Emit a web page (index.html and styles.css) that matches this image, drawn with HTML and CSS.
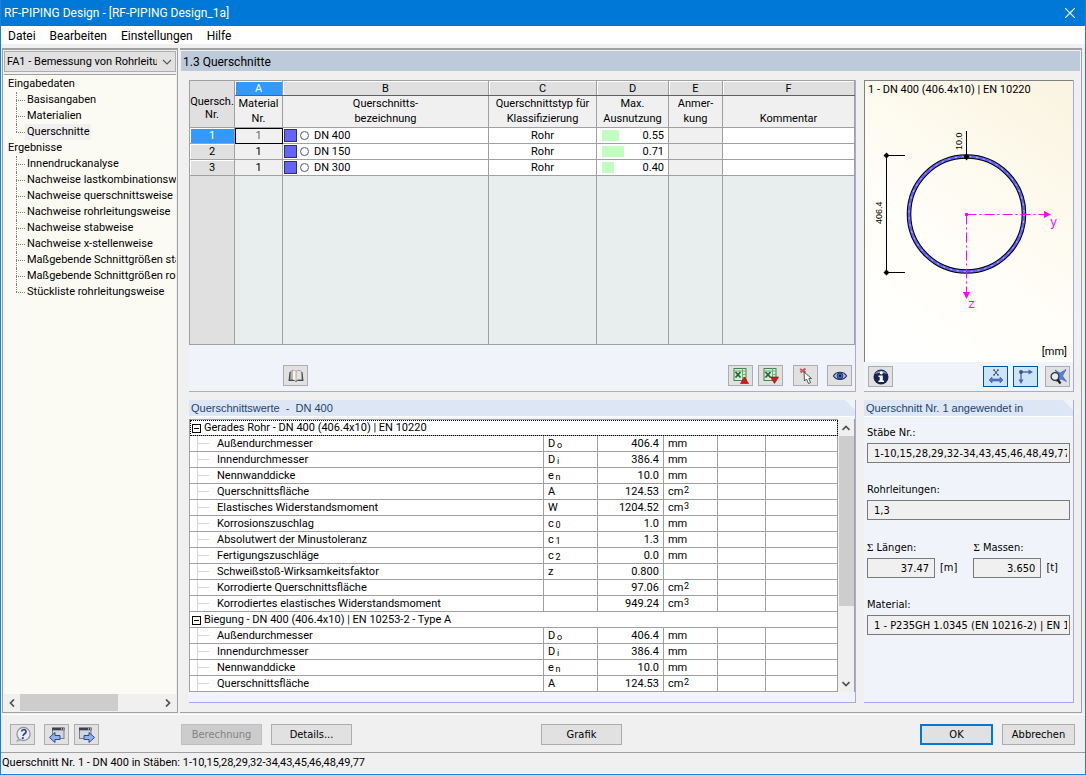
FILE: index.html
```html
<!DOCTYPE html>
<html lang="de">
<head>
<meta charset="utf-8">
<title>RF-PIPING Design</title>
<link rel="stylesheet" href="styles.css">
</head>
<body>
<div class="window">
  <header class="titlebar">
    <h1 class="title">RF-PIPING Design - [RF-PIPING Design_1a]</h1>
    <button class="close" type="button" aria-label="Schließen">
      <svg width="10" height="10" viewBox="0 0 10 10"><path d="M0 0L10 10M10 0L0 10" stroke="#fff" stroke-width="1.2"/></svg>
    </button>
  </header>
  <nav class="menubar">
    <button type="button">Datei</button>
    <button type="button">Bearbeiten</button>
    <button type="button">Einstellungen</button>
    <button type="button">Hilfe</button>
  </nav>

  <div class="workspace">
    <aside class="sidebar">
      <div class="case-picker">
        <select class="case-select" aria-label="Bemessungsfall"><option>FA1 - Bemessung von Rohrleitungen</option></select>
        <svg class="chevron" width="10" height="6" viewBox="0 0 10 6"><path d="M1 1L5 5L9 1" fill="none" stroke="#555" stroke-width="1.1"/></svg>
      </div>
      <ul class="tree">
        <li>Eingabedaten
          <ul class="branch">
            <li><span>Basisangaben</span></li>
            <li><span>Materialien</span></li>
            <li><span class="current">Querschnitte</span></li>
          </ul>
        </li>
        <li>Ergebnisse
          <ul class="branch">
            <li><span>Innendruckanalyse</span></li>
            <li><span>Nachweise lastkombinationsweise</span></li>
            <li><span>Nachweise querschnittsweise</span></li>
            <li><span>Nachweise rohrleitungsweise</span></li>
            <li><span>Nachweise stabweise</span></li>
            <li><span>Nachweise x-stellenweise</span></li>
            <li><span>Maßgebende Schnittgrößen stabweise</span></li>
            <li><span>Maßgebende Schnittgrößen rohrleitungsweise</span></li>
            <li><span>Stückliste rohrleitungsweise</span></li>
          </ul>
        </li>
      </ul>
      <div class="hscroll">
        <button type="button" aria-label="Nach links"><svg width="6" height="8" viewBox="0 0 6 8"><path d="M5 0.5L1.5 4L5 7.5" fill="none" stroke="#505050" stroke-width="1.7"/></svg></button>
        <div class="track"><div class="thumb"></div></div>
        <button type="button" aria-label="Nach rechts"><svg width="6" height="8" viewBox="0 0 6 8"><path d="M1 0.5L4.500 4L1 7.5" fill="none" stroke="#505050" stroke-width="1.700"/></svg></button>
      </div>
    </aside>

    <main class="main">
      <h2 class="page-title">1.3 Querschnitte</h2>
      <div class="content">
        <section class="panel grid-panel">
          <table class="sections">
            <colgroup><col class="c-no"><col class="c-a"><col class="c-b"><col class="c-c"><col class="c-d"><col class="c-e"><col></colgroup>
            <thead>
              <tr class="letters"><th rowspan="2" class="corner">Quersch.<br>Nr.</th><th class="active">A</th><th>B</th><th>C</th><th>D</th><th>E</th><th>F</th></tr>
              <tr class="captions"><th>Material<br>Nr.</th><th>Querschnitts-<br>bezeichnung</th><th>Querschnittstyp für<br>Klassifizierung</th><th>Max.<br>Ausnutzung</th><th>Anmer-<br>kung</th><th>Kommentar</th></tr>
            </thead>
            <tbody>
              <tr><th class="active">1</th><td class="mat focus">1</td><td><span class="name"><i class="swatch"></i><i class="pipe"></i>DN 400</span></td><td class="mid">Rohr</td><td><span class="util"><i style="width:17px"></i>0.55</span></td><td class="dim"></td><td></td></tr>
              <tr><th>2</th><td class="mat">1</td><td><span class="name"><i class="swatch"></i><i class="pipe"></i>DN 150</span></td><td class="mid">Rohr</td><td><span class="util"><i style="width:22px"></i>0.71</span></td><td class="dim"></td><td></td></tr>
              <tr><th>3</th><td class="mat">1</td><td><span class="name"><i class="swatch"></i><i class="pipe"></i>DN 300</span></td><td class="mid">Rohr</td><td><span class="util"><i style="width:12px"></i>0.40</span></td><td class="dim"></td><td></td></tr>
              <tr class="rest"><td></td><td></td><td></td><td></td><td></td><td></td><td></td></tr>
            </tbody>
          </table>
          <div class="tools grid-tools">
            <button class="icon-btn" type="button" aria-label="Bibliothek">
              <svg width="18" height="16" viewBox="0 0 18 16"><path d="M2.500 4L1.500 13H8L9 14L10 13H16.500L15.500 4Z" fill="#3d4658"/><path d="M3.500 3.500C5 2 7.500 2 9 3.500V13C7 11.500 5 11.500 3 12Z" fill="#b9b6ae" stroke="#666" stroke-width=".5"/><path d="M6 2.500L9 3.500V13L6 11.500Z" fill="#f8f6ef"/><path d="M9 3.500C10.500 2 13 2 14.500 3.500L15 12C13 11.500 11 11.500 9 13Z" fill="#e6e3dc" stroke="#666" stroke-width=".5"/></svg>
            </button>
            <span class="push"></span>
            <button class="icon-btn" type="button" aria-label="Excel-Export">
              <svg width="18" height="18" viewBox="0 0 18 18"><rect x="2" y="1.500" width="12" height="12" fill="#dcecdc" stroke="#3c8a4a"/><path d="M2 4H14M10.500 1.500V13.500M10 7.500H14M10 10.500H14" stroke="#6bb077"/><path d="M3.500 5L8.500 10.500M8.500 5L3.500 10.500" stroke="#1c6a30" stroke-width="1.800"/><path d="M12.500 10L16.500 16.500H8.500Z" fill="#e01616" stroke="#8c0c0c" stroke-width=".6"/></svg>
            </button>
            <button class="icon-btn" type="button" aria-label="Excel-Import">
              <svg width="18" height="18" viewBox="0 0 18 18"><rect x="2" y="1.500" width="12" height="12" fill="#dcecdc" stroke="#3c8a4a"/><path d="M2 4H14M10.500 1.500V13.500M10 7.500H14" stroke="#6bb077"/><path d="M3.500 5L8.500 10.500M8.500 5L3.500 10.500" stroke="#1c6a30" stroke-width="1.800"/><path d="M12.500 16.500L16.500 10H8.500Z" fill="#e01616" stroke="#8c0c0c" stroke-width=".6"/></svg>
            </button>
            <button class="icon-btn gap-l" type="button" aria-label="Auswählen">
              <svg width="18" height="18" viewBox="0 0 18 18"><path d="M3 2L8.500 5.500M3.500 5.500L8.500 1.500" stroke="#d85050" stroke-width="2"/><path d="M7 5L7.500 14L9.500 12L11.500 16.500L13.600 15.600L11.800 11.500H14.500Z" fill="#fff" stroke="#444" stroke-width=".9"/></svg>
            </button>
            <button class="icon-btn gap-m" type="button" aria-label="Ansicht">
              <svg width="18" height="18" viewBox="0 0 18 18"><path d="M2.500 9C5 4 13 4 15.500 9C13 13.500 5 13.500 2.500 9Z" fill="#b9c6e6" stroke="#1f2f66" stroke-width="1.200"/><circle cx="9" cy="8.800" r="3" fill="#4a6cc8" stroke="#16244f" stroke-width=".8"/><circle cx="9" cy="8.800" r="1.200" fill="#0a1230"/></svg>
            </button>
          </div>
        </section>

        <section class="panel preview-panel">
          <figure class="preview">
            <figcaption>1 - DN 400 (406.4x10) | EN 10220</figcaption>
            <svg class="drawing" viewBox="0 0 208 246">
              <circle cx="101.500" cy="116" r="57.500" fill="none" stroke="#000" stroke-width="4.600"/>
              <circle cx="101.500" cy="116" r="57.500" fill="none" stroke="#6060fa" stroke-width="2.600"/>
              <circle cx="101.500" cy="116" r="57.500" fill="none" stroke="#c4c4ff" stroke-width="1" stroke-dasharray="2 5"/>
              <path d="M21.500 57.500V174.500M21.500 57.500H40M21.500 174.500H40M101.500 33V61" stroke="#000"/>
              <path d="M18.500 57.500L21.500 54.500L24.500 57.500L21.500 60.500ZM18.500 174.500L21.500 171.500L24.500 174.500L21.500 177.500ZM98.500 58.500L101.500 55.500L104.500 58.500L101.500 62.500Z"/>
              <path d="M101.500 116.500H179M101.500 116.500V194" stroke="#f0f" stroke-dasharray="10 3 2 3"/>
              <path d="M179 113V120L186 116.500ZM98 194H105L101.500 201ZM100 115H103V118H100Z" fill="#f0f"/>
              <text class="dim-text" transform="translate(17 126) rotate(-90)">406.4</text>
              <text class="dim-text" transform="translate(97 52) rotate(-90)">10.0</text>
              <text class="axis-text" x="185" y="128">y</text>
              <text class="axis-text" x="103" y="210">z</text>
            </svg>
            <p class="unit">[mm]</p>
          </figure>
          <div class="tools preview-tools">
            <button class="icon-btn" type="button" aria-label="Info">
              <svg width="18" height="18" viewBox="0 0 18 18"><circle cx="9" cy="9" r="7.500" fill="#18264e"/><path d="M3 6C5 1.500 13 1.500 15 6C12 4.500 6 4.500 3 6Z" fill="#7c8cb8"/><circle cx="9.300" cy="4.800" r="1.600" fill="#fff"/><path d="M6.500 7.500H10.800V12.500H12V14H6.500V12.500H7.700V9H6.500Z" fill="#fff"/></svg>
            </button>
            <span class="push"></span>
            <button class="icon-btn on" type="button" aria-label="Bemaßung">
              <svg width="18" height="18" viewBox="0 0 18 18"><path d="M7 2L11 7M11 2L7 7M6 2H8M10 2H12M6 7H8M10 7H12" stroke="#333" stroke-width=".9"/><path d="M2 12L5 9V11H13V9L16 12L13 15V13H5V15Z" fill="#5478c8" stroke="#3a5694" stroke-width=".6"/></svg>
            </button>
            <button class="icon-btn on" type="button" aria-label="Achsen">
              <svg width="18" height="18" viewBox="0 0 18 18"><path d="M4 4H13M4 4V13" stroke="#5570a8" stroke-width="1.400"/><circle cx="4" cy="4" r="1.900" fill="#3a5080"/><path d="M11.500 1.500L16 4L11.500 6.500ZM1.500 11.500L4 16L6.500 11.500Z" fill="#4a66a4"/></svg>
            </button>
            <button class="icon-btn gap-s" type="button" aria-label="Ganze Ansicht">
              <svg width="18" height="18" viewBox="0 0 18 18"><path d="M6 2L11 5L17 1.500L13.500 8L17.500 13.500L12 11L7 13.500L9.500 8Z" fill="#5580dc" stroke="#3558ae" stroke-width=".6"/><circle cx="6" cy="8.500" r="3.900" fill="#e8eefc" fill-opacity=".8" stroke="#333" stroke-width="1.300"/><path d="M8.500 11.500L11.500 15.500" stroke="#222" stroke-width="2.400"/></svg>
            </button>
          </div>
        </section>

        <section class="panel values-panel">
          <h3 class="panel-title">Querschnittswerte&nbsp; -&nbsp; DN 400</h3>
          <div class="values-box">
            <table class="values">
              <colgroup><col><col class="v-sym"><col class="v-num"><col class="v-unit"><col class="v-x"><col class="v-y"></colgroup>
              <tbody>
                <tr class="group selected"><td colspan="6"><button type="button" class="toggle" aria-label="Zuklappen"></button>Gerades Rohr - DN 400 (406.4x10) | EN 10220</td></tr>
                <tr><td class="prop">Außendurchmesser</td><td>D <sub>o</sub></td><td>406.4</td><td>mm</td><td></td><td></td></tr>
                <tr><td class="prop">Innendurchmesser</td><td>D <sub>i</sub></td><td>386.4</td><td>mm</td><td></td><td></td></tr>
                <tr><td class="prop">Nennwanddicke</td><td>e <sub>n</sub></td><td>10.0</td><td>mm</td><td></td><td></td></tr>
                <tr><td class="prop">Querschnittsfläche</td><td>A</td><td>124.53</td><td>cm <sup>2</sup></td><td></td><td></td></tr>
                <tr><td class="prop">Elastisches Widerstandsmoment</td><td>W</td><td>1204.52</td><td>cm <sup>3</sup></td><td></td><td></td></tr>
                <tr><td class="prop">Korrosionszuschlag</td><td>c <sub>0</sub></td><td>1.0</td><td>mm</td><td></td><td></td></tr>
                <tr><td class="prop">Absolutwert der Minustoleranz</td><td>c <sub>1</sub></td><td>1.3</td><td>mm</td><td></td><td></td></tr>
                <tr><td class="prop">Fertigungszuschläge</td><td>c <sub>2</sub></td><td>0.0</td><td>mm</td><td></td><td></td></tr>
                <tr><td class="prop">Schweißstoß-Wirksamkeitsfaktor</td><td>z</td><td>0.800</td><td></td><td></td><td></td></tr>
                <tr><td class="prop">Korrodierte Querschnittsfläche</td><td></td><td>97.06</td><td>cm <sup>2</sup></td><td></td><td></td></tr>
                <tr><td class="prop">Korrodiertes elastisches Widerstandsmoment</td><td></td><td>949.24</td><td>cm <sup>3</sup></td><td></td><td></td></tr>
                <tr class="group"><td colspan="6"><button type="button" class="toggle" aria-label="Zuklappen"></button>Biegung - DN 400 (406.4x10) | EN 10253-2 - Type A</td></tr>
                <tr><td class="prop">Außendurchmesser</td><td>D <sub>o</sub></td><td>406.4</td><td>mm</td><td></td><td></td></tr>
                <tr><td class="prop">Innendurchmesser</td><td>D <sub>i</sub></td><td>386.4</td><td>mm</td><td></td><td></td></tr>
                <tr><td class="prop">Nennwanddicke</td><td>e <sub>n</sub></td><td>10.0</td><td>mm</td><td></td><td></td></tr>
                <tr><td class="prop">Querschnittsfläche</td><td>A</td><td>124.53</td><td>cm <sup>2</sup></td><td></td><td></td></tr>
              </tbody>
            </table>
            <div class="vscroll">
              <button type="button" aria-label="Nach oben"><svg width="8" height="6" viewBox="0 0 8 6"><path d="M0.500 5L4 1.500L7.500 5" fill="none" stroke="#505050" stroke-width="1.700"/></svg></button>
              <div class="track"><div class="thumb"></div></div>
              <button type="button" aria-label="Nach unten"><svg width="8" height="6" viewBox="0 0 8 6"><path d="M0.500 1L4 4.500L7.500 1" fill="none" stroke="#505050" stroke-width="1.700"/></svg></button>
            </div>
          </div>
        </section>

        <section class="panel usage-panel">
          <h3 class="panel-title">Querschnitt Nr. 1 angewendet in</h3>
          <div class="usage">
            <div class="field"><label for="members">Stäbe Nr.:</label><input id="members" readonly value="1-10,15,28,29,32-34,43,45,46,48,49,77"></div>
            <div class="field"><label for="pipes">Rohrleitungen:</label><input id="pipes" readonly value="1,3"></div>
            <div class="pair">
              <div class="field"><label for="len"><span class="sigma">Σ</span> Längen:</label><div class="measure"><input id="len" readonly value="37.47"><span>[m]</span></div></div>
              <div class="field"><label for="mass"><span class="sigma">Σ</span> Massen:</label><div class="measure"><input id="mass" readonly value="3.650"><span>[t]</span></div></div>
            </div>
            <div class="field"><label for="material">Material:</label><input id="material" readonly value="1 - P235GH 1.0345 (EN 10216-2) | EN 13480-3"></div>
          </div>
        </section>
      </div>
    </main>
  </div>

  <footer class="actions">
    <div class="nav-btns">
      <button class="icon-btn" type="button" aria-label="Hilfe">
        <svg width="18" height="18" viewBox="0 0 18 18"><circle cx="9.500" cy="8" r="6.600" fill="#e9edf4" stroke="#8c929c" stroke-width="1.200"/><path d="M4 12L2 16L8 14.500Z" fill="#aab0bb"/><path d="M7.500 5.500C8 3 12.500 3 12 6C11.700 7.800 9.500 7.800 9 10" fill="none" stroke="#3c4a80" stroke-width="1.700"/><circle cx="8.800" cy="12.200" r="1.100" fill="#3c4a80"/></svg>
      </button>
      <button class="icon-btn gap-l" type="button" aria-label="Vorherige Maske">
        <svg width="18" height="18" viewBox="0 0 18 18"><rect x="4.500" y="2" width="11.500" height="10.500" fill="#d2d5dc" stroke="#7b8088"/><path d="M4 3H16.500" stroke="#3a4252" stroke-width="2.600"/><path d="M13 3H16" stroke="#fff" stroke-dasharray="1 1"/><path d="M1.500 11.500L7 6.500V9.500H12V13.500H7V16.500Z" fill="#8fb2ee" stroke="#2c4788"/></svg>
      </button>
      <button class="icon-btn" type="button" aria-label="Nächste Maske">
        <svg width="18" height="18" viewBox="0 0 18 18"><rect x="1.500" y="2" width="11.500" height="10.500" fill="#d2d5dc" stroke="#7b8088"/><path d="M1 3H13.500" stroke="#3a4252" stroke-width="2.600"/><path d="M10 3H13" stroke="#fff" stroke-dasharray="1 1"/><path d="M16.500 11.500L11 6.500V9.500H6V13.500H11V16.500Z" fill="#8fb2ee" stroke="#2c4788"/></svg>
      </button>
    </div>
    <div class="calc-btns">
      <button class="btn wide" type="button" disabled>Berechnung</button>
      <button class="btn wide" type="button">Details...</button>
    </div>
    <button class="btn wide" type="button">Grafik</button>
    <div class="end-btns">
      <button class="btn default" type="button">OK</button>
      <button class="btn" type="button">Abbrechen</button>
    </div>
  </footer>
  <div class="statusbar">Querschnitt Nr. 1 - DN 400 in Stäben: 1-10,15,28,29,32-34,43,45,46,48,49,77</div>
</div>
</body>
</html>
```
FILE: styles.css
```css
*, *::before, *::after { box-sizing: border-box; }

body {
  margin: 0;
  background: #f0f0f0;
  color: #000;
  font: 11px/16px "DejaVu Sans Condensed", Tahoma, sans-serif;
}

h1, h2, h3, p, ul, figure { margin: 0; padding: 0; font-weight: normal; }
ul { list-style: none; }
button, input, select { font: inherit; color: inherit; margin: 0; }
svg { display: block; }

.window {
  min-height: 100vh;
  display: flex;
  flex-direction: column;
  border: 1px solid #1a80d8;
  border-top: 0;
}

/* title and menu */
.titlebar {
  height: 26px;
  display: flex;
  align-items: center;
  justify-content: space-between;
  padding: 0 10px 0 3px;
  background: #0078d7;
  color: #fff;
}
.title { font: 12px/16px Roboto, "Noto Sans", sans-serif; }
.close { border: 0; padding: 0; background: none; }

.menubar {
  display: flex;
  gap: 14px;
  height: 18px;
  padding: 0 7px;
  background: #fff;
}
.menubar button {
  border: 0;
  padding: 0;
  background: none;
  font: 12px/20px Roboto, "Noto Sans", sans-serif;
}

.workspace {
  flex: 1;
  display: grid;
  grid-template-columns: 176px 1fr;
  gap: 2px;
  margin-top: 4px;
  padding: 0 3px 0 1px;
}

/* sidebar */
.sidebar {
  display: flex;
  flex-direction: column;
  min-width: 0;
  border: 1px solid #a0a0a0;
  border-top: 2px solid #a0a0a0;
  padding: 1px;
  font: 11px/16px Roboto, Tahoma, sans-serif;
}
.case-picker { position: relative; margin-bottom: 2px; }
.case-select {
  display: block;
  width: 100%;
  height: 21px;
  appearance: none;
  border: 1px solid #adadad;
  border-radius: 0;
  padding: 0 18px 0 2px;
  background: #e1e1e1;
  text-overflow: clip;
}
.chevron { position: absolute; right: 4px; top: 8px; }

.tree {
  flex: 1;
  overflow: hidden;
  padding: 1px 0 0 4px;
  border-top: 1px solid #a0a0a0;
  background: #fbfbf3;
  white-space: nowrap;
}
.branch { padding-left: 8px; }
.branch li { position: relative; padding-left: 9px; }
.branch li::before {
  content: "";
  position: absolute;
  left: 0;
  top: 0;
  height: 16px;
  border-left: 1px dotted #808080;
}
.branch li:last-child::before { height: 8px; }
.branch li::after {
  content: "";
  position: absolute;
  left: 0;
  top: 8px;
  width: 9px;
  border-top: 1px dotted #808080;
}
.branch span { padding: 0 2px; }
.branch .current { display: inline-block; background: #f0f0f0; }

.hscroll, .vscroll { display: flex; background: #f0f0f0; }
.hscroll button, .vscroll button {
  width: 16px;
  height: 17px;
  padding: 0;
  border: 0;
  background: none;
  display: grid;
  place-items: center;
}
.track { flex: 1; }
.thumb { background: #cdcdcd; }
.hscroll .thumb { width: 70%; height: 100%; }

/* main area */
.main {
  display: flex;
  flex-direction: column;
  min-width: 0;
  border: 1px solid #a0a0a0;
  border-top-width: 2px;
  border-left: 0;
  padding: 1px 1px 0;
}
.page-title {
  height: 20px;
  padding-left: 2px;
  background: #bccada;
  font: 12px/22px Roboto, Tahoma, sans-serif;
}
.content {
  flex: 1;
  display: grid;
  grid-template-columns: minmax(0, 1fr) 210px;
  grid-template-rows: auto 1fr;
  gap: 8px;
  padding: 9px 6px 9px 8px;
}
.panel {
  display: flex;
  flex-direction: column;
  min-width: 0;
  background: #f0f4fa;
  border-right: 1px solid #a8a8e8;
  border-bottom: 1px solid #a8a8e8;
}
.panel-title {
  height: 17px;
  padding-left: 2px;
  background: #dce6f5;
  border-bottom: 1px solid #fff;
  color: #1c4470;
  font: 11px/16px "Liberation Sans", Arial, sans-serif;
  clip-path: polygon(0 0, calc(100% - 10px) 0, 100% 10px, 100% 100%, 0 100%);
}

table {
  width: 100%;
  border-collapse: collapse;
  table-layout: fixed;
  font: 11px/15px Roboto, Arial, sans-serif;
}
th, td { padding: 0; border: 1px solid #a0a0a0; font-weight: normal; }

/* section list */
.c-no { width: 45px; }
.c-a { width: 48px; }
.c-b { width: 206px; }
.c-c { width: 108px; }
.c-d { width: 72px; }
.c-e { width: 54px; }
.sections { border-top: 1px solid #a0a0a0; background: #fff; text-align: center; }
.sections tr { height: 16px; }
.sections th { background: #e0e0e0; }
.sections .letters { height: 15px; line-height: 13px; }
.letters th:not(.corner) { border-bottom-color: #606060; box-shadow: inset 1px 1px #fff; }
.sections .corner { padding-top: 8px; line-height: 13px; }
.sections .captions th {
  height: 31px;
  padding-bottom: 1px;
  background: #f0f0f0;
  line-height: 15px;
  vertical-align: bottom;
  border-top-color: #606060;
}
.sections tbody th { box-shadow: inset 1px 1px #fff; }
.sections .active { background: #3399ff; color: #fff; }
.mat, .dim { background: #f0f0f0; }
.focus { outline: 1px solid #000; outline-offset: -1px; color: #75606f; }
.name { display: flex; align-items: center; }
.swatch { width: 13px; height: 13px; margin: 0 3px 0 1px; background: #6464ff; border: 1px solid #303060; }
.pipe { width: 9px; height: 9px; margin-right: 5px; border: 1px solid #505878; border-radius: 50%; }
.util { display: flex; align-items: center; justify-content: space-between; padding: 0 4px 0 5px; }
.util i { height: 11px; background: #c0ffc0; }
.sections .rest { height: 169px; }
.rest td { background: #e8eeee; }
.rest td:first-child { background: #e0e0e0; }

.tools { display: flex; align-items: center; gap: 5px; }
.push { flex: 1; }
.grid-tools { padding: 20px 3px 4px 94px; }
.preview-tools { padding: 4px 3px 4px 4px; }
.icon-btn {
  width: 25px;
  height: 21px;
  padding: 0;
  border: 1px solid #adadad;
  background: #e1e1e1;
  display: grid;
  place-items: center;
}
.icon-btn.on { border-color: #005499; background: #cce4f7; }
.gap-s { margin-left: 2px; }
.gap-m { margin-left: 4px; }
.gap-l { margin-left: 5px; }

/* cross-section drawing */
.preview {
  flex: 1;
  display: flex;
  flex-direction: column;
  border: 1px solid #808080;
  border-width: 1px 0 0 1px;
  background: linear-gradient(215deg, #faf4e0, #fffef8 60%, #fff);
  font: 11px/16px Roboto, Arial, sans-serif;
}
.preview figcaption { padding: 1px 0 0 3px; }
.drawing { width: 100%; flex: 1; min-height: 0; }
.unit { padding: 0 6px 2px; text-align: right; }
.dim-text { font: 9px "Liberation Sans", Arial, sans-serif; }
.axis-text { font: 12px "Liberation Mono", monospace; fill: #f0f; }

/* section values */
.values-box { display: flex; margin-top: 2px; border-right: 1px solid #a0a0a0; }
.values { background: #fff; }
.values tr { height: 16px; }
.values td { padding: 0 4px; white-space: nowrap; overflow: hidden; }
.values td:nth-child(3) { text-align: right; }
.values .group td { padding: 0 2px; }
.values .selected td { outline: 1px dotted #000; outline-offset: -1px; }
.v-sym { width: 54px; }
.v-num { width: 66px; }
.v-unit { width: 54px; }
.v-x { width: 48px; }
.v-y { width: 72px; }
.values .prop {
  padding-left: 27px;
  background: linear-gradient(#d8d8d8, #d8d8d8) 8px 7px / 11px 1px no-repeat,
    linear-gradient(#d8d8d8, #d8d8d8) 7px 0 / 1px 100% no-repeat;
}
.values sub, .values sup { font-size: 9px; line-height: 1; }
.values sub { vertical-align: -1px; margin-left: -1px; }
.values sup { vertical-align: 2px; margin-left: -2px; }
.toggle {
  display: inline-block;
  width: 9px;
  height: 9px;
  margin-right: 3px;
  padding: 0;
  border: 1px solid #000;
  background: linear-gradient(#000, #000) center / 5px 1px no-repeat #fff;
  vertical-align: -1px;
}
.vscroll { flex-direction: column; }
.vscroll .thumb { height: 71%; margin-left: 1px; }

/* usage */
.usage { display: flex; flex-direction: column; gap: 19px; padding: 8px 3px 9px 3px; }
.field { display: flex; flex-direction: column; gap: 2px; min-width: 0; }
.field input {
  width: 100%;
  min-width: 0;
  height: 20px;
  padding: 0 2px 0 6px;
  border: 1px solid #7a7a7a;
  background: #f0f0f0;
}
.pair { display: flex; gap: 16px; }
.measure { display: flex; align-items: center; gap: 5px; }
.measure input { width: 68px; padding-right: 5px; text-align: right; }
.sigma { font-family: "Liberation Serif", serif; }

/* footer */
.actions {
  display: grid;
  grid-template-columns: 171px 360px 1fr auto;
  align-items: center;
  margin-top: 1px;
  padding: 9px 10px 7px 9px;
  border-top: 1px solid #fff;
}
.nav-btns, .calc-btns, .end-btns { display: flex; }
.nav-btns { gap: 5px; }
.nav-btns .gap-l { margin-left: 4px; }
.calc-btns, .end-btns { gap: 9px; }
.btn { width: 73px; height: 21px; padding: 0; border: 1px solid #adadad; background: #e1e1e1; }
.btn.wide { width: 81px; }
.btn:disabled { background: #cccccc; border-color: #bfbfbf; color: #838383; }
.btn.default { border: 2px solid #0078d7; }
.statusbar {
  height: 22px;
  padding-left: 1px;
  border-top: 1px solid #a0a0a0;
  border-bottom: 1px solid #fff;
  font: 11px/20px Roboto, Arial, sans-serif;
}
```
